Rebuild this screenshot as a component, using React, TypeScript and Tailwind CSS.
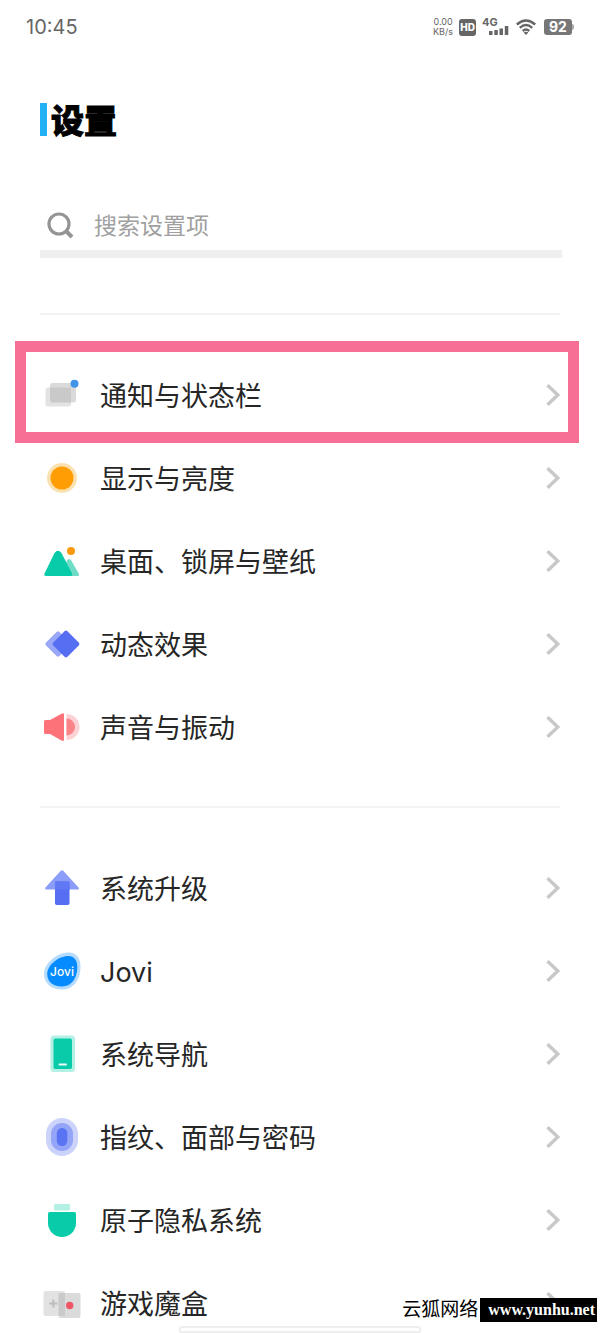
import React from 'react';

interface SettingItem { id: string; label: string; icon: React.ReactNode; highlighted?: boolean; }
interface SettingGroupProps { items: SettingItem[]; }

const IconBox = ({ children }: { children: React.ReactNode }) => (
  <svg viewBox="0 0 44 44" className="size-11 shrink-0" aria-hidden="true">{children}</svg>
);

const NotificationIcon = () => (
  <IconBox>
    <rect x="5.5" y="14.500" width="25.5" height="19" rx="2.5" fill="#e3e3e3" />
    <rect x="10" y="10" width="26" height="19.5" rx="2.5" fill="#dadada" />
    <path d="M10 14.500h21v15H12.500q-2.500 0-2.500-2.500z" fill="#c9c9c9" />
    <circle cx="34.500" cy="10.700" r="4" fill="#4295e8" />
  </IconBox>
);

const BrightnessIcon = () => (
  <IconBox>
    <circle cx="22" cy="22" r="15" fill="#fce1b0" />
    <circle cx="22" cy="22" r="11.500" fill="#ff9d04" />
  </IconBox>
);

const DesktopIcon = () => (
  <IconBox>
    <path d="M22 37L27 21.500q2-3 4.200 0L39 35q.6 2-1.200 2z" fill="#6edcc6" />
    <path d="M4.500 34.500L14.500 14q3.500-4.500 7 0L32 34.500q.6 2.500-1.500 2.500H6q-2.300 0-1.500-2.500z" fill="#08cbaa" />
    <circle cx="31" cy="12" r="4" fill="#fc9a0c" />
  </IconBox>
);

const MotionIcon = () => (
  <IconBox>
    <rect x="8.500" y="12.500" width="19" height="19" rx="2" fill="#9aa8f8" transform="rotate(45 18 22)" />
    <rect x="16" y="12" width="20" height="20" rx="2" fill="#566ff2" transform="rotate(45 26 22)" />
  </IconBox>
);

const SoundIcon = () => (
  <IconBox>
    <path d="M26.500 9A13 13 0 0 1 26.500 35z" fill="#fdd2d4" />
    <path d="M26.500 13.500A8.500 8.500 0 0 1 26.500 30.500z" fill="#fc8489" />
    <path d="M5.500 15H10L22 8.500q2-.8 2 1.200V34.500q0 2-2 1.200L10 29H5.500Q4 29 4 27.500V16.500Q4 15 5.500 15z" fill="#fc7278" />
  </IconBox>
);

const UpgradeIcon = () => (
  <IconBox>
    <path d="M20.800 4.800q1.200-1 2.400 0L38.500 21.500q1.200 2-.8 2H6.300q-2 0-.8-2z" fill="#8b9df8" />
    <rect x="15" y="15.500" width="14.500" height="23.500" rx="1.800" fill="#566ff2" />
    <path d="M15 15.500h14.500v8H15z" fill="#6078f3" />
  </IconBox>
);

const JoviIcon = () => (
  <IconBox>
    <path d="M29 3.500C36 3.500 40.500 9 40.500 17.500C40.500 30 34 40.500 22 40.500C11 40.500 4 34 4 25C4 14 17 3.500 29 3.500z" fill="#b5dcfe" />
    <path d="M28.500 7C34 7 37.300 11 37.300 18C37.300 28.500 32 37.500 22 37.500C12.500 37.500 7.200 32.500 7.200 25C7.200 16 18.500 7 28.500 7z" fill="#058bfd" />
    <text x="22" y="27" textAnchor="middle" fontFamily="Inter, sans-serif" fontSize="12" fontWeight="500" fill="#ffffff">Jovi</text>
  </IconBox>
);

const NavigationIcon = () => (
  <IconBox>
    <rect x="10.500" y="3.500" width="24.500" height="36.500" rx="3.500" fill="#b4f0e4" />
    <rect x="13.500" y="6.500" width="18.500" height="30.500" rx="1.800" fill="#08cbaa" />
    <rect x="18.500" y="31.500" width="8.500" height="2" rx="1" fill="#e9fffa" />
  </IconBox>
);

const FingerprintIcon = () => (
  <IconBox>
    <rect x="6" y="3" width="32" height="38" rx="16" fill="#ccd3fb" />
    <rect x="11" y="8" width="22" height="28" rx="11" fill="#94a4f6" />
    <rect x="16.800" y="13" width="10.500" height="18" rx="5.200" fill="#5a73f2" />
  </IconBox>
);

const PrivacyIcon = () => (
  <IconBox>
    <rect x="14" y="6" width="16" height="6.500" rx="1" fill="#b4f0e4" />
    <path d="M9.500 14h25q1.500 0 1.500 1.500V25A14 14 0 0 1 8 25V15.500Q8 14 9.500 14z" fill="#08cbaa" />
  </IconBox>
);

const GameIcon = () => (
  <IconBox>
    <rect x="3.500" y="10" width="21.500" height="25" rx="2" fill="#e2e2e2" />
    <rect x="18.500" y="12" width="22" height="25" rx="2" fill="#dbdbdb" />
    <path d="M18.500 12H25V35H18.500z" fill="#cacaca" />
    <path d="M13.300 18.500v8M9.300 22.500h8" stroke="#bdbdc2" strokeWidth="2.200" />
    <circle cx="29.700" cy="24.500" r="3.700" fill="#f05566" />
  </IconBox>
);

const ChevronIcon = () => (
  <svg viewBox="0 0 14 22" className="h-[22px] w-3.5 shrink-0" aria-hidden="true">
    <path d="M1.500 1.200L11.800 11L1.500 20.800" fill="none" stroke="#c8c8c8" strokeWidth="3.400" />
  </svg>
);

const displayItems: SettingItem[] = [
  { id: 'notification', label: '通知与状态栏', icon: <NotificationIcon />, highlighted: true },
  { id: 'display', label: '显示与亮度', icon: <BrightnessIcon /> },
  { id: 'desktop', label: '桌面、锁屏与壁纸', icon: <DesktopIcon /> },
  { id: 'motion', label: '动态效果', icon: <MotionIcon /> },
  { id: 'sound', label: '声音与振动', icon: <SoundIcon /> },
];

const systemItems: SettingItem[] = [
  { id: 'upgrade', label: '系统升级', icon: <UpgradeIcon /> },
  { id: 'jovi', label: 'Jovi', icon: <JoviIcon /> },
  { id: 'navigation', label: '系统导航', icon: <NavigationIcon /> },
  { id: 'fingerprint', label: '指纹、面部与密码', icon: <FingerprintIcon /> },
  { id: 'privacy', label: '原子隐私系统', icon: <PrivacyIcon /> },
  { id: 'game', label: '游戏魔盒', icon: <GameIcon /> },
];

const StatusBar = () => (
  <header className="flex h-[54px] shrink-0 items-center justify-between px-[26px] text-[#666666]">
    <time className="text-xl">10:45</time>
    <div className="flex items-center">
      <div className="mr-1.5 text-center text-[9px] leading-[10px]">
        <p>0.00</p>
        <p>KB/s</p>
      </div>
      <span className="mr-1.5 flex h-[17px] w-[17px] items-center justify-center rounded-[3px] bg-[#666666] text-[10px] font-extrabold text-white">HD</span>
      <div className="mr-1.5 flex h-5 w-7 flex-col">
        <span className="text-[11px] leading-[11px] font-bold">4G</span>
        <svg viewBox="0 0 28 9" className="-mt-0.5 h-[9px] w-7" fill="#666666" aria-hidden="true">
          <path d="M7 5h3.500v4H7zM12.300 4h3.500v5h-3.500zM17.500 2.500h3.500V9h-3.500zM22.800 0h3.500v9h-3.500z" />
        </svg>
      </div>
      <svg viewBox="0 0 20 16" className="mr-2 h-4 w-5" fill="none" stroke="#666666" strokeWidth="2.400" aria-hidden="true">
        <path d="M.8 5.500Q10-2.500 19.200 5.500M3.800 8.900Q10 3.200 16.200 8.900M6.700 12Q10 9 13.300 12" />
        <path d="M10 16L7.600 13.600Q10 11.800 12.400 13.600z" fill="#666666" stroke="none" />
      </svg>
      <span className="flex h-4 w-7 items-center justify-center rounded-[3px] bg-[#777777] text-sm leading-4 font-bold text-white">92</span>
      <span className="h-1.5 w-0.5 rounded-r-sm bg-[#aaaaaa]" />
    </div>
  </header>
);

const SettingGroup = ({ items }: SettingGroupProps) => (
  <ul className="border-t-2 border-[#f3f3f3] pt-[38px] pb-[38px]">
    {items.map((item) => (
      <li key={item.id} className="relative">
        <a href={`#${item.id}`} className="flex h-[83px] items-center gap-4 text-[27px] text-[#262626]">
          {item.icon}
          <span className="flex-1 pt-1.5">{item.label}</span>
          <ChevronIcon />
        </a>
        {item.highlighted && (
          <div className="pointer-events-none absolute -top-3 -right-[19px] -left-[25px] h-[102px] border-[11px] border-[#f86f96]" />
        )}
      </li>
    ))}
  </ul>
);

export default function App() {
  return (
    <div className="relative flex h-screen flex-col overflow-hidden bg-white font-['Inter','Noto_Sans_CJK_SC',sans-serif]">
      <StatusBar />

      <main className="flex-1 overflow-y-auto px-10 [scrollbar-width:none]">
        <div className="mt-[49px] flex h-[33px] items-center gap-1">
          <span className="h-full w-[7px] bg-[#22b1f5]" />
          <h1 className="pt-1 text-[33px] leading-none font-black text-black [-webkit-text-stroke:1px_black]">设置</h1>
        </div>

        <label className="mt-16 mb-[55px] -mr-0.5 flex h-[58px] items-center gap-5 border-b-8 border-[#efefef] pl-[7px]">
          <svg viewBox="0 0 27 27" className="size-[27px] shrink-0" fill="none" stroke="#949494" aria-hidden="true">
            <circle cx="12" cy="12" r="10" strokeWidth="3.200" />
            <path d="M18.500 18.500L25 25" strokeWidth="4" />
          </svg>
          <input
            type="search"
            aria-label="搜索设置项"
            placeholder="搜索设置项"
            className="min-w-0 flex-1 pt-0.5 text-[23px] text-[#333333] outline-none placeholder:text-[#a0a0a0]"
          />
        </label>

        <SettingGroup items={displayItems} />
        <SettingGroup items={systemItems} />
      </main>

      {/* gesture bar */}
      <div className="absolute bottom-0 left-1/2 h-[7px] w-[243px] -translate-x-1/2 rounded-full border-2 border-[#eeeeee] bg-white" />

      <footer className="absolute right-[3px] bottom-[11px] flex h-6 items-center gap-0.5 text-black">
        <span className="font-['Liberation_Serif','Noto_Sans_CJK_SC',serif] text-[19px] leading-6">云狐网络</span>
        <a href="#yunhu" className="bg-black pr-0.5 pl-2 font-['Liberation_Serif',serif] text-base leading-6 font-bold text-white">www.yunhu.net</a>
      </footer>
    </div>
  );
}
